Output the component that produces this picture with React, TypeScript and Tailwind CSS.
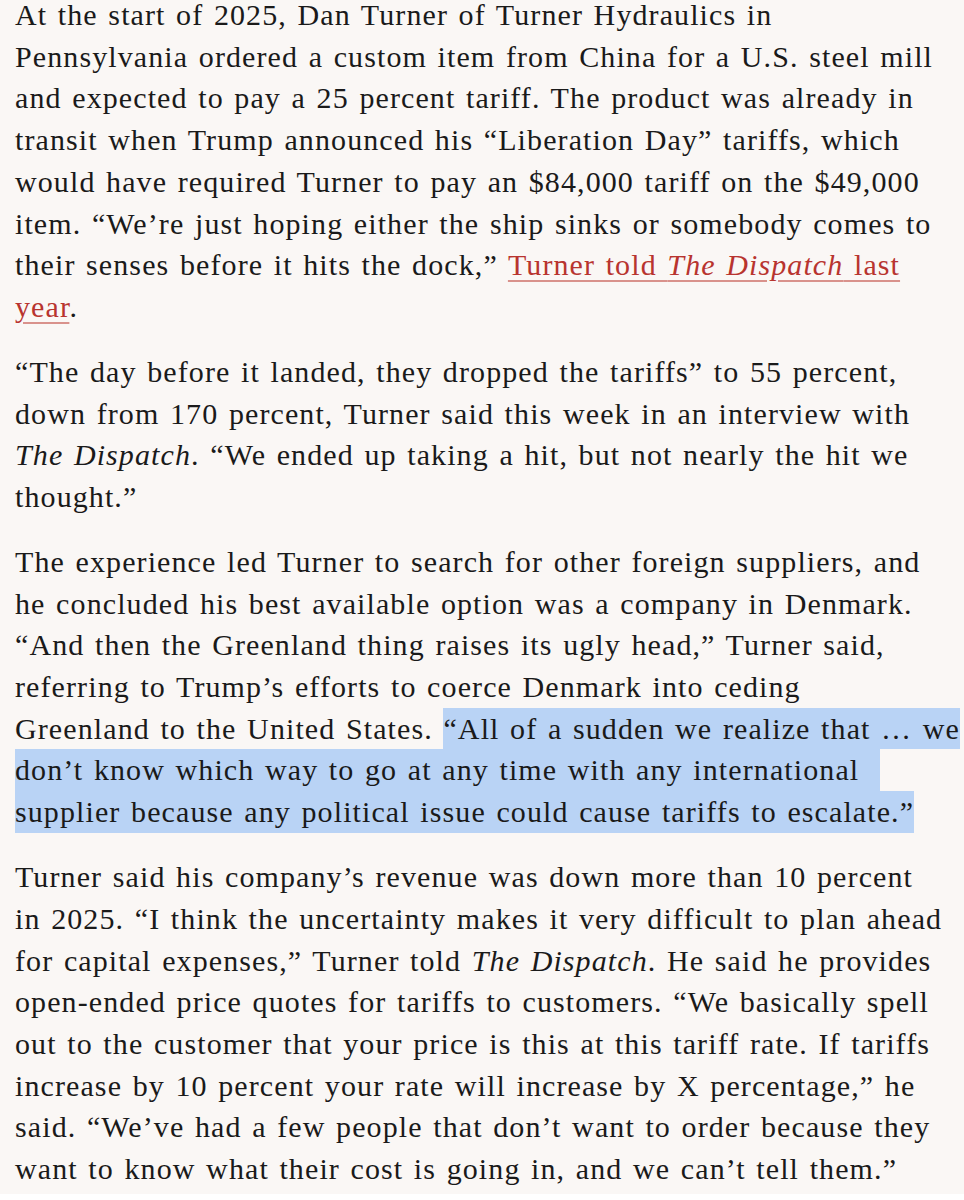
const link = 'text-[#b8342f] underline decoration-[#d9928c] decoration-2 underline-offset-[5px]';
const mark = 'bg-[#b9d3f5] py-[4.25px]';

export default function App() {
  return (
    <div className="min-h-[1200px] bg-[#faf7f5] px-[15px] text-[#1a1a1a]">
      <article
        className="-mt-[6px] flex flex-col gap-[23.3px] whitespace-nowrap text-[30px] leading-[41.7px] tracking-[1.1px] [word-spacing:2px]"
        style={{ fontFamily: '"Liberation Serif", "Times New Roman", serif' }}
      >
        <p>
          At the start of 2025, Dan Turner of Turner Hydraulics in<br />
          Pennsylvania ordered a custom item from China for a U.S. steel mill<br />
          and expected to pay a 25 percent tariff. The product was already in<br />
          transit when Trump announced his “Liberation Day” tariffs, which<br />
          would have required Turner to pay an $84,000 tariff on the $49,000<br />
          item. “We’re just hoping either the ship sinks or somebody comes to<br />
          their senses before it hits the dock,”{' '}
          <a href="#" className={link}>
            Turner told <em>The Dispatch</em> last<br />
            year
          </a>
          .
        </p>

        <p>
          “The day before it landed, they dropped the tariffs” to 55 percent,<br />
          down from 170 percent, Turner said this week in an interview with<br />
          <em>The Dispatch</em>. “We ended up taking a hit, but not nearly the hit we<br />
          thought.”
        </p>

        <p>
          The experience led Turner to search for other foreign suppliers, and<br />
          he concluded his best available option was a company in Denmark.<br />
          “And then the Greenland thing raises its ugly head,” Turner said,<br />
          referring to Trump’s efforts to coerce Denmark into ceding<br />
          Greenland to the United States.{' '}
          <span className={mark}>
            “All of a sudden we realize that … we<br />
            don’t know which way to go at any time with any international&nbsp;&nbsp;<br />
            supplier because any political issue could cause tariffs to escalate.”
          </span>
        </p>

        <p>
          Turner said his company’s revenue was down more than 10 percent<br />
          in 2025. “I think the uncertainty makes it very difficult to plan ahead<br />
          for capital expenses,” Turner told <em>The Dispatch</em>. He said he provides<br />
          open-ended price quotes for tariffs to customers. “We basically spell<br />
          out to the customer that your price is this at this tariff rate. If tariffs<br />
          increase by 10 percent your rate will increase by X percentage,” he<br />
          said. “We’ve had a few people that don’t want to order because they<br />
          want to know what their cost is going in, and we can’t tell them.”
        </p>
      </article>
    </div>
  );
}
